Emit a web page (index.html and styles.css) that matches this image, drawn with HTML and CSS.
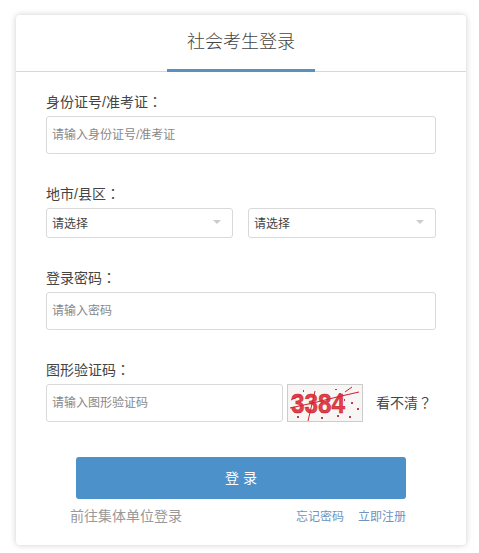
FILE: index.html
```html
<!DOCTYPE html>
<html lang="zh-CN">
<head>
    <meta charset="UTF-8">
    <title>社会考生登录</title>
    <link rel="stylesheet" href="styles.css">
</head>
<body>
    <div class="card">
        <div class="card-head">
            <h1>社会考生登录</h1>
        </div>
        <form class="card-body">
            <div class="field field-id">
                <label>身份证号/准考证<span class="punct" lang="zh-TW">：</span></label>
                <input type="text" placeholder="请输入身份证号/准考证">
            </div>
            <div class="field field-area">
                <label>地市/县区<span class="punct" lang="zh-TW">：</span></label>
                <div class="select-row">
                    <div class="select"><span>请选择</span><i class="caret"></i></div>
                    <div class="select"><span>请选择</span><i class="caret"></i></div>
                </div>
            </div>
            <div class="field field-pwd">
                <label>登录密码<span class="punct" lang="zh-TW">：</span></label>
                <input type="text" placeholder="请输入密码">
            </div>
            <div class="field field-code">
                <label>图形验证码<span class="punct" lang="zh-TW">：</span></label>
                <div class="code-row">
                    <input type="text" placeholder="请输入图形验证码">
                    <svg class="captcha" width="76" height="38" viewBox="0 0 76 38">
                        <rect x="0.5" y="0.5" width="75" height="37" fill="#f8f5f5" stroke="#cccccc"/>
                        <text x="4" y="29" textLength="54" lengthAdjust="spacingAndGlyphs" class="captcha-text">3384</text>
                        <path d="M3 24 L26 19 L50 13 L72 8" stroke="#d8222e" stroke-width="1.2" fill="none"/>
                        <path d="M21 37 L28 7 M58 8 L65 3 M4 16 L14 11" stroke="#d8222e" stroke-width="1" fill="none"/>
                        <g fill="#b8414a">
                            <rect x="10" y="32" width="2" height="2"/>
                            <rect x="16" y="6" width="1" height="2"/>
                            <rect x="48" y="5" width="2" height="1"/>
                            <rect x="52" y="9" width="2" height="2"/>
                            <rect x="57" y="15" width="1" height="2"/>
                            <rect x="64" y="18" width="2" height="2"/>
                            <rect x="70" y="24" width="2" height="2"/>
                            <rect x="62" y="32" width="2" height="2"/>
                            <rect x="50" y="31" width="2" height="2"/>
                            <rect x="34" y="33" width="2" height="2"/>
                        </g>
                    </svg>
                    <a class="refresh">看不清<span class="punct" lang="zh-TW">？</span></a>
                </div>
            </div>
            <button type="button" class="btn-login">登 录</button>
            <div class="links">
                <a class="link-group">前往集体单位登录</a>
                <div class="link-right">
                    <a>忘记密码</a>
                    <a>立即注册</a>
                </div>
            </div>
        </form>
    </div>
</body>
</html>
```

FILE: styles.css
```css
* { box-sizing: border-box; }
body { margin: 0; padding: 15px 13px 8px 16px; background-color: #fff; font-family: "Liberation Sans", "Noto Sans CJK SC", sans-serif; color: #333; }
.card { width: 450px; height: 530px; background-color: #fff; border-radius: 4px; box-shadow: 0 0 6px rgba(0,0,0,0.2); }
.card-head { height: 57px; border-bottom: 1px solid #d8d8d8; text-align: center; }
.card-head h1 { display: inline-block; width: 148px; height: 57px; margin: 0; padding-top: 14px; border-bottom: 3px solid #5b8fbd; font-size: 18px; font-weight: 300; line-height: 26px; color: #444; }
.card-body { padding: 0 30px; }
.punct { font-family: "Noto Sans CJK TC", sans-serif; line-height: 1; }
.field label { display: block; height: 20px; font-size: 14px; line-height: 20px; color: #444; margin-bottom: 4px; }
.field-id { padding-top: 20px; }
.field-area { padding-top: 30px; }
.field-pwd { padding-top: 30px; }
.field-code { padding-top: 30px; }
input { display: block; width: 390px; height: 38px; padding: 0 5px; border: 1px solid #d9d9d9; border-radius: 3px; font-family: inherit; font-size: 12px; background-color: #fff; outline: none; }
input::placeholder { color: #888; opacity: 1; }
.select-row { display: flex; justify-content: space-between; }
.select { display: flex; width: 187px; height: 30px; padding: 0 11px 2px 5px; align-items: center; justify-content: space-between; border: 1px solid #d9d9d9; border-radius: 3px; font-size: 12px; color: #444; }
.select:last-child { width: 188px; }
.caret { width: 0; height: 0; border-left: 4px solid transparent; border-right: 4px solid transparent; border-top: 4px solid #ccc; }
.code-row { display: flex; align-items: center; }
.code-row input { width: 237px; margin-right: 4px; }
.captcha { display: block; flex: none; }
.captcha-text { font-family: "Liberation Sans", sans-serif; font-size: 27px; font-weight: bold; fill: #e0404a; stroke: #c81e2a; stroke-width: 0.5; }
.refresh { margin: 0 0 2px 13px; font-size: 14px; color: #444; white-space: nowrap; }
.btn-login { display: block; width: 330px; height: 42px; margin: 35px 0 0 30px; padding: 0 0 2px; border: none; border-radius: 3px; background-color: #4d91cb; color: #fff; font-family: inherit; font-size: 14px; }
.links { display: flex; justify-content: space-between; align-items: center; width: 336px; margin: 7px 0 0 24px; height: 18px; font-size: 12px; }
.link-group { font-size: 14px; color: #999; }
.link-right { display: flex; gap: 14px; }
.link-right a { color: #6f94bd; }
```
